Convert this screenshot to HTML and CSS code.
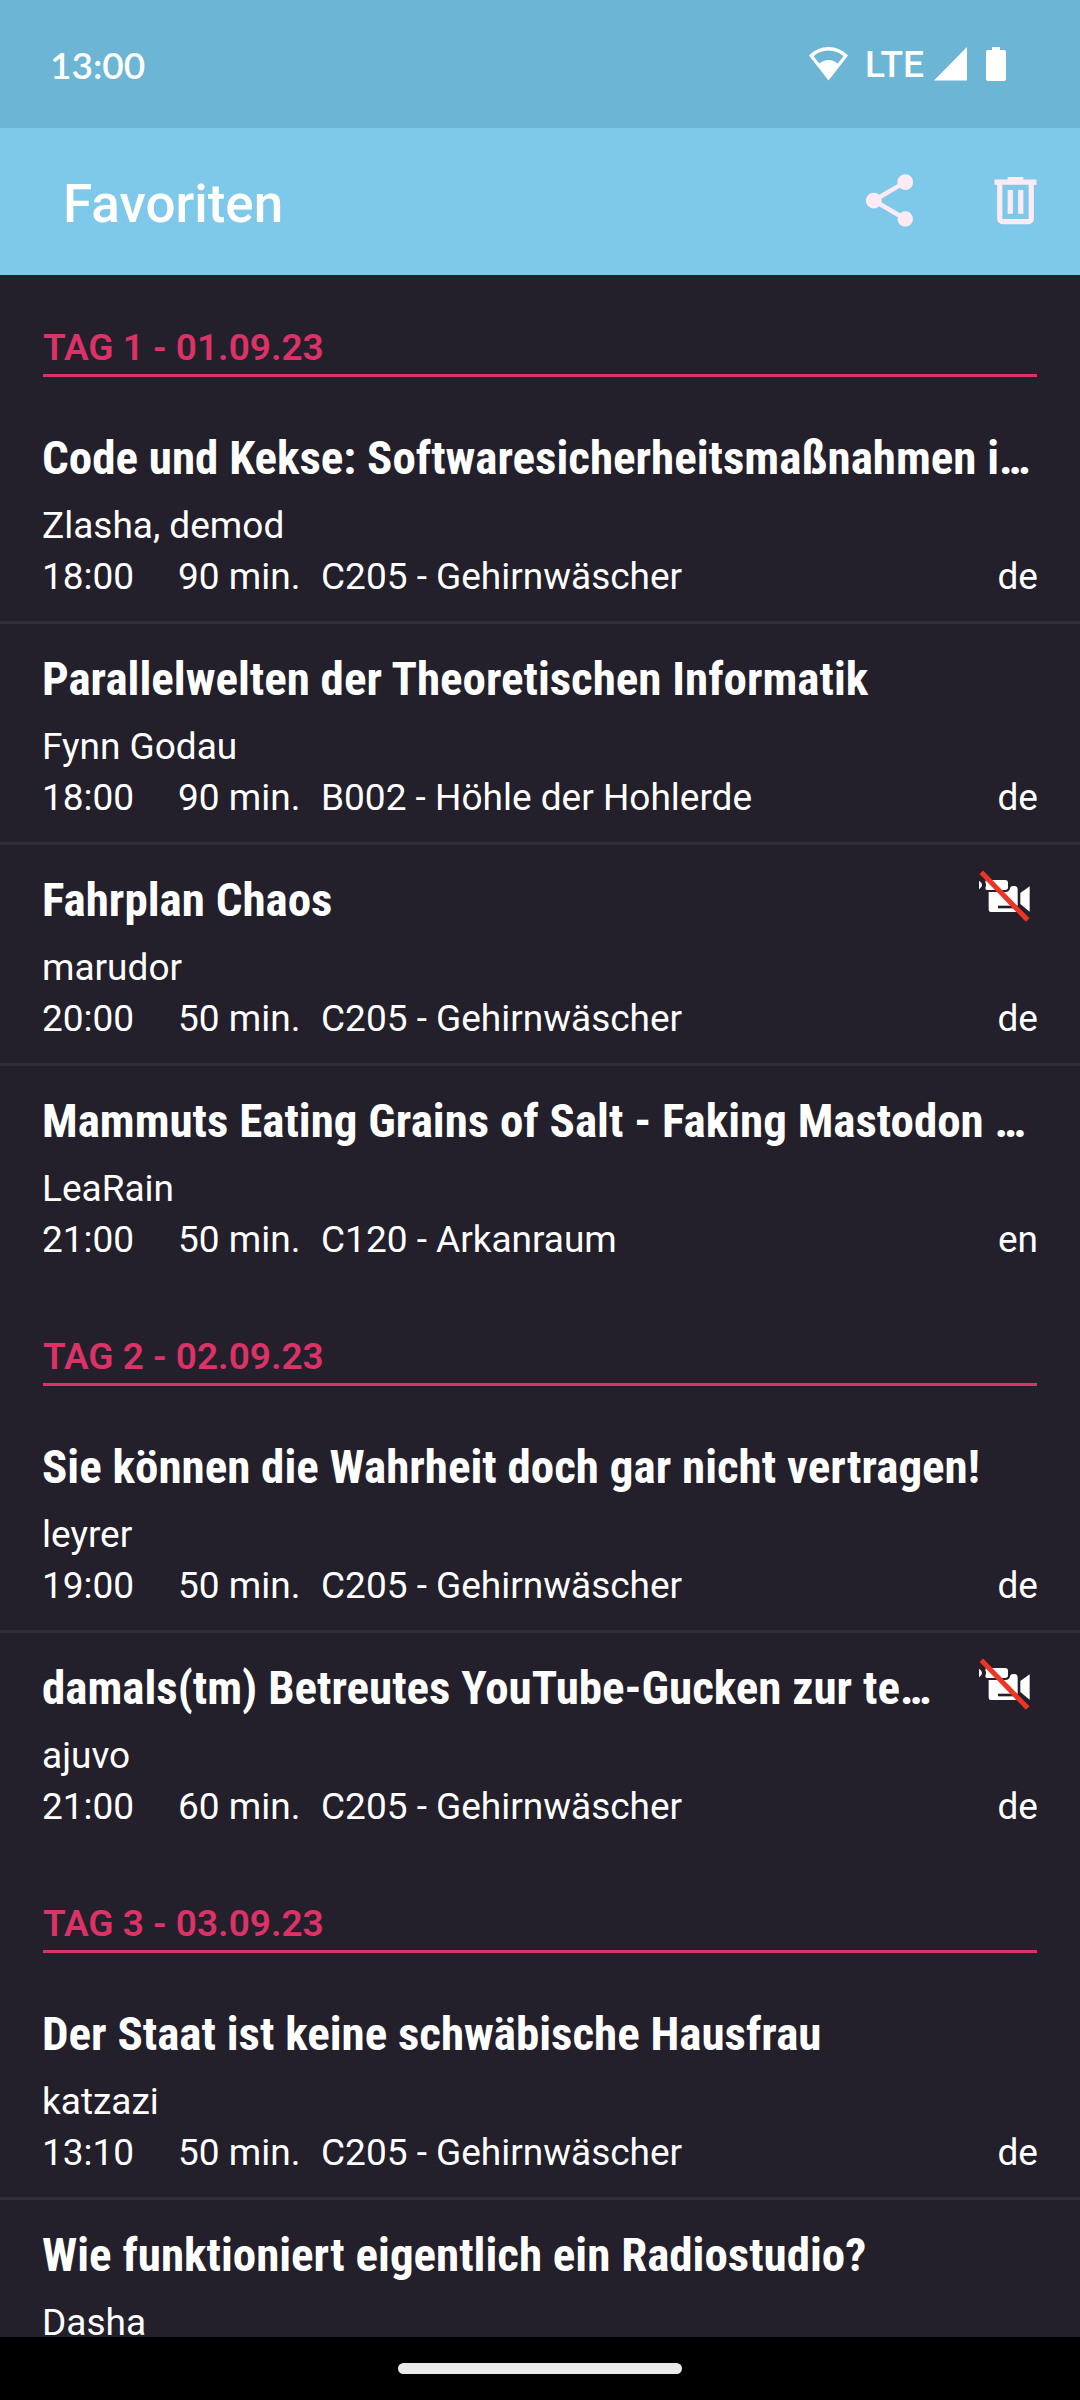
FILE: index.html
```html
<!DOCTYPE html>
<html lang="de">
	<head>
		<meta charset="UTF-8" />
		<meta name="viewport" content="width=device-width, initial-scale=1.0" />
		<title>Favoriten</title>
		<link rel="stylesheet" href="styles.css">
	</head>
	<body>
		<div class="status-bar">
			<span class="clock">13:00</span>
			<div class="status-icons">
				<svg class="wifi" width="39" height="34" viewBox="0 0 39 34">
					<path d="M19.500 0C12 0 5.500 3 0 8.500L19.500 33.500L39 8.500C33.500 3 27 0 19.500 0ZM19.500 3.500C25.500 3.500 30.300 5.700 34.500 9.200L28.600 16.600C26 14.200 23 13 19.500 13C16 13 13 14.200 10.400 16.600L4.500 9.200C8.700 5.700 13.500 3.500 19.500 3.500Z" fill="#fff" />
				</svg>
				<span class="network">LTE</span>
				<svg class="signal" width="33" height="34" viewBox="0 0 33 34">
					<path d="M0 33.500L33 0V33.500Z" fill="#fff" />
				</svg>
				<svg class="battery" width="20" height="34" viewBox="0 0 20 34">
					<path d="M6 0H14V3H18Q20 3 20 5V32Q20 34 18 34H2Q0 34 0 32V5Q0 3 2 3H6Z" fill="#fff" />
				</svg>
			</div>
		</div>

		<header class="toolbar">
			<h1 class="toolbar-title">Favoriten</h1>
			<button class="icon-button" type="button" aria-label="Teilen">
				<svg width="63" height="63" viewBox="0 0 24 24">
					<path d="M18 16.080c-.76 0-1.440.3-1.960.77L8.910 12.700c.05-.23.09-.46.09-.7s-.04-.47-.09-.7l7.050-4.110c.54.5 1.250.81 2.040.81 1.660 0 3-1.340 3-3s-1.340-3-3-3-3 1.340-3 3c0 .24.04.47.09.7L8.040 9.810C7.500 9.310 6.790 9 6 9c-1.660 0-3 1.340-3 3s1.340 3 3 3c.79 0 1.500-.31 2.040-.81l7.120 4.160c-.05.21-.08.43-.08.65 0 1.610 1.310 2.920 2.920 2.920s2.920-1.310 2.920-2.920-1.310-2.920-2.920-2.920z" fill="#fcebf3" />
				</svg>
			</button>
			<button class="icon-button" type="button" aria-label="Alle löschen">
				<svg width="63" height="63" viewBox="0 0 24 24">
					<path d="M9 3V4H4V6H5V19A2 2 0 0 0 7 21H17A2 2 0 0 0 19 19V6H20V4H15V3H9M7 6H17V19H7V6M9 8V17H11V8H9M13 8V17H15V8H13Z" fill="#fcebf3" />
				</svg>
			</button>
		</header>

		<main class="favorites">
			<section>
				<h2 class="day">TAG 1 - 01.09.23</h2>
				<ul class="sessions">
					<li class="session">
						<div class="session-head"><h3 class="title">Code und Kekse: Softwaresicherheitsmaßnahmen i…</h3></div>
						<p class="speakers">Zlasha, demod</p>
						<p class="details"><span>18:00</span><span>90 min.</span><span>C205 - Gehirnwäscher</span><span>de</span></p>
					</li>
					<li class="session">
						<div class="session-head"><h3 class="title">Parallelwelten der Theoretischen Informatik</h3></div>
						<p class="speakers">Fynn Godau</p>
						<p class="details"><span>18:00</span><span>90 min.</span><span>B002 - Höhle der Hohlerde</span><span>de</span></p>
					</li>
					<li class="session">
						<div class="session-head">
							<h3 class="title">Fahrplan Chaos</h3>
							<svg class="no-video" viewBox="99 42 192 192" role="img" aria-label="Keine Aufzeichnung">
								<path d="M120 92Q129 98 129 105Q129 112 120 118Z" fill="#fff" />
								<path d="M144 90H198Q207 90 207 98V112Q207 120 198 120H144Q139 120 139 114Q144 105 139 96Q139 90 144 90Z" fill="#fff" />
								<path d="M149 126H198Q213 126 214 112Q218 107 226 108Q236 109 236 118V186H156Q149 186 149 179Z" fill="#fff" />
								<path d="M244 129L272 109V185L244 162Z" fill="#fff" />
								<path d="M177 171H238" stroke="#23202b" stroke-width="8" />
								<path d="M127 67L266 210" stroke="#ee3524" stroke-width="15" />
							</svg>
						</div>
						<p class="speakers">marudor</p>
						<p class="details"><span>20:00</span><span>50 min.</span><span>C205 - Gehirnwäscher</span><span>de</span></p>
					</li>
					<li class="session">
						<div class="session-head"><h3 class="title">Mammuts Eating Grains of Salt - Faking Mastodon …</h3></div>
						<p class="speakers">LeaRain</p>
						<p class="details"><span>21:00</span><span>50 min.</span><span>C120 - Arkanraum</span><span>en</span></p>
					</li>
				</ul>
			</section>

			<section>
				<h2 class="day">TAG 2 - 02.09.23</h2>
				<ul class="sessions">
					<li class="session">
						<div class="session-head"><h3 class="title">Sie können die Wahrheit doch gar nicht vertragen!</h3></div>
						<p class="speakers">leyrer</p>
						<p class="details"><span>19:00</span><span>50 min.</span><span>C205 - Gehirnwäscher</span><span>de</span></p>
					</li>
					<li class="session">
						<div class="session-head">
							<h3 class="title">damals(tm) Betreutes YouTube-Gucken zur te…</h3>
							<svg class="no-video" viewBox="99 42 192 192" role="img" aria-label="Keine Aufzeichnung">
								<path d="M120 92Q129 98 129 105Q129 112 120 118Z" fill="#fff" />
								<path d="M144 90H198Q207 90 207 98V112Q207 120 198 120H144Q139 120 139 114Q144 105 139 96Q139 90 144 90Z" fill="#fff" />
								<path d="M149 126H198Q213 126 214 112Q218 107 226 108Q236 109 236 118V186H156Q149 186 149 179Z" fill="#fff" />
								<path d="M244 129L272 109V185L244 162Z" fill="#fff" />
								<path d="M177 171H238" stroke="#23202b" stroke-width="8" />
								<path d="M127 67L266 210" stroke="#ee3524" stroke-width="15" />
							</svg>
						</div>
						<p class="speakers">ajuvo</p>
						<p class="details"><span>21:00</span><span>60 min.</span><span>C205 - Gehirnwäscher</span><span>de</span></p>
					</li>
				</ul>
			</section>

			<section>
				<h2 class="day">TAG 3 - 03.09.23</h2>
				<ul class="sessions">
					<li class="session">
						<div class="session-head"><h3 class="title">Der Staat ist keine schwäbische Hausfrau</h3></div>
						<p class="speakers">katzazi</p>
						<p class="details"><span>13:10</span><span>50 min.</span><span>C205 - Gehirnwäscher</span><span>de</span></p>
					</li>
					<li class="session">
						<div class="session-head"><h3 class="title">Wie funktioniert eigentlich ein Radiostudio?</h3></div>
						<p class="speakers">Dasha</p>
					</li>
				</ul>
			</section>
		</main>

		<div class="nav-bar"><div class="nav-handle"></div></div>
	</body>
</html>
```
FILE: styles.css
```css
* {
	box-sizing: border-box;
	margin: 0;
	padding: 0;
}

body {
	display: flex;
	flex-direction: column;
	height: 100vh;
	overflow: hidden;
	background: #23202b;
	color: #fff;
	font-family: Roboto, sans-serif;
	font-size: 37px;
	line-height: 51px;
}

/* Status bar */
.status-bar {
	display: flex;
	flex-shrink: 0;
	align-items: center;
	justify-content: space-between;
	height: 128px;
	padding: 0 74px 0 50px;
	background: #6cb5d5;
}

.clock {
	font-family: Lato, sans-serif;
	font-size: 37px;
	font-weight: 600;
}

.status-icons {
	display: flex;
	align-items: center;
}

.network {
	margin: 0 10px 0 17px;
	font-size: 37px;
	font-weight: 500;
}

.battery {
	margin-left: 19px;
}

/* Toolbar */
.toolbar {
	display: flex;
	flex-shrink: 0;
	align-items: center;
	height: 147px;
	padding: 0 2px 2px 63px;
	background: #7ec8e9;
}

.toolbar-title {
	flex: 1;
	padding-top: 8px;
	font-size: 53px;
	font-weight: 500;
}

.icon-button {
	display: flex;
	align-items: center;
	justify-content: center;
	width: 126px;
	height: 126px;
	border: none;
	background: none;
}

/* Session list */
.favorites {
	flex: 1;
	min-height: 0;
	overflow: hidden;
}

.day {
	margin: 0 43px 26px;
	padding: 47px 0 1px;
	border-bottom: 3px solid #dc3268;
	color: #dc3268;
	font-size: 37px;
	font-weight: 600;
}

.sessions {
	list-style: none;
}

.session {
	padding: 24px 42px 19px;
}

.session + .session {
	border-top: 3px solid #302d38;
}

.session-head {
	display: flex;
	align-items: center;
	height: 62px;
	margin-bottom: 11px;
}

.title {
	flex: 1;
	min-width: 0;
	overflow: hidden;
	font-family: "Roboto Condensed", Roboto, sans-serif;
	font-size: 47px;
	font-weight: 700;
	line-height: 62px;
	text-overflow: ellipsis;
	white-space: nowrap;
}

.no-video {
	flex-shrink: 0;
	width: 64px;
	height: 64px;
	margin: 0 2px 8px 40px;
}

.details {
	display: grid;
	grid-template-columns: 136px 143px 1fr auto;
}

/* Gesture navigation */
.nav-bar {
	display: flex;
	flex-shrink: 0;
	align-items: center;
	justify-content: center;
	height: 63px;
	background: #000;
}

.nav-handle {
	width: 284px;
	height: 11px;
	border-radius: 6px;
	background: #ebebeb;
}
```
